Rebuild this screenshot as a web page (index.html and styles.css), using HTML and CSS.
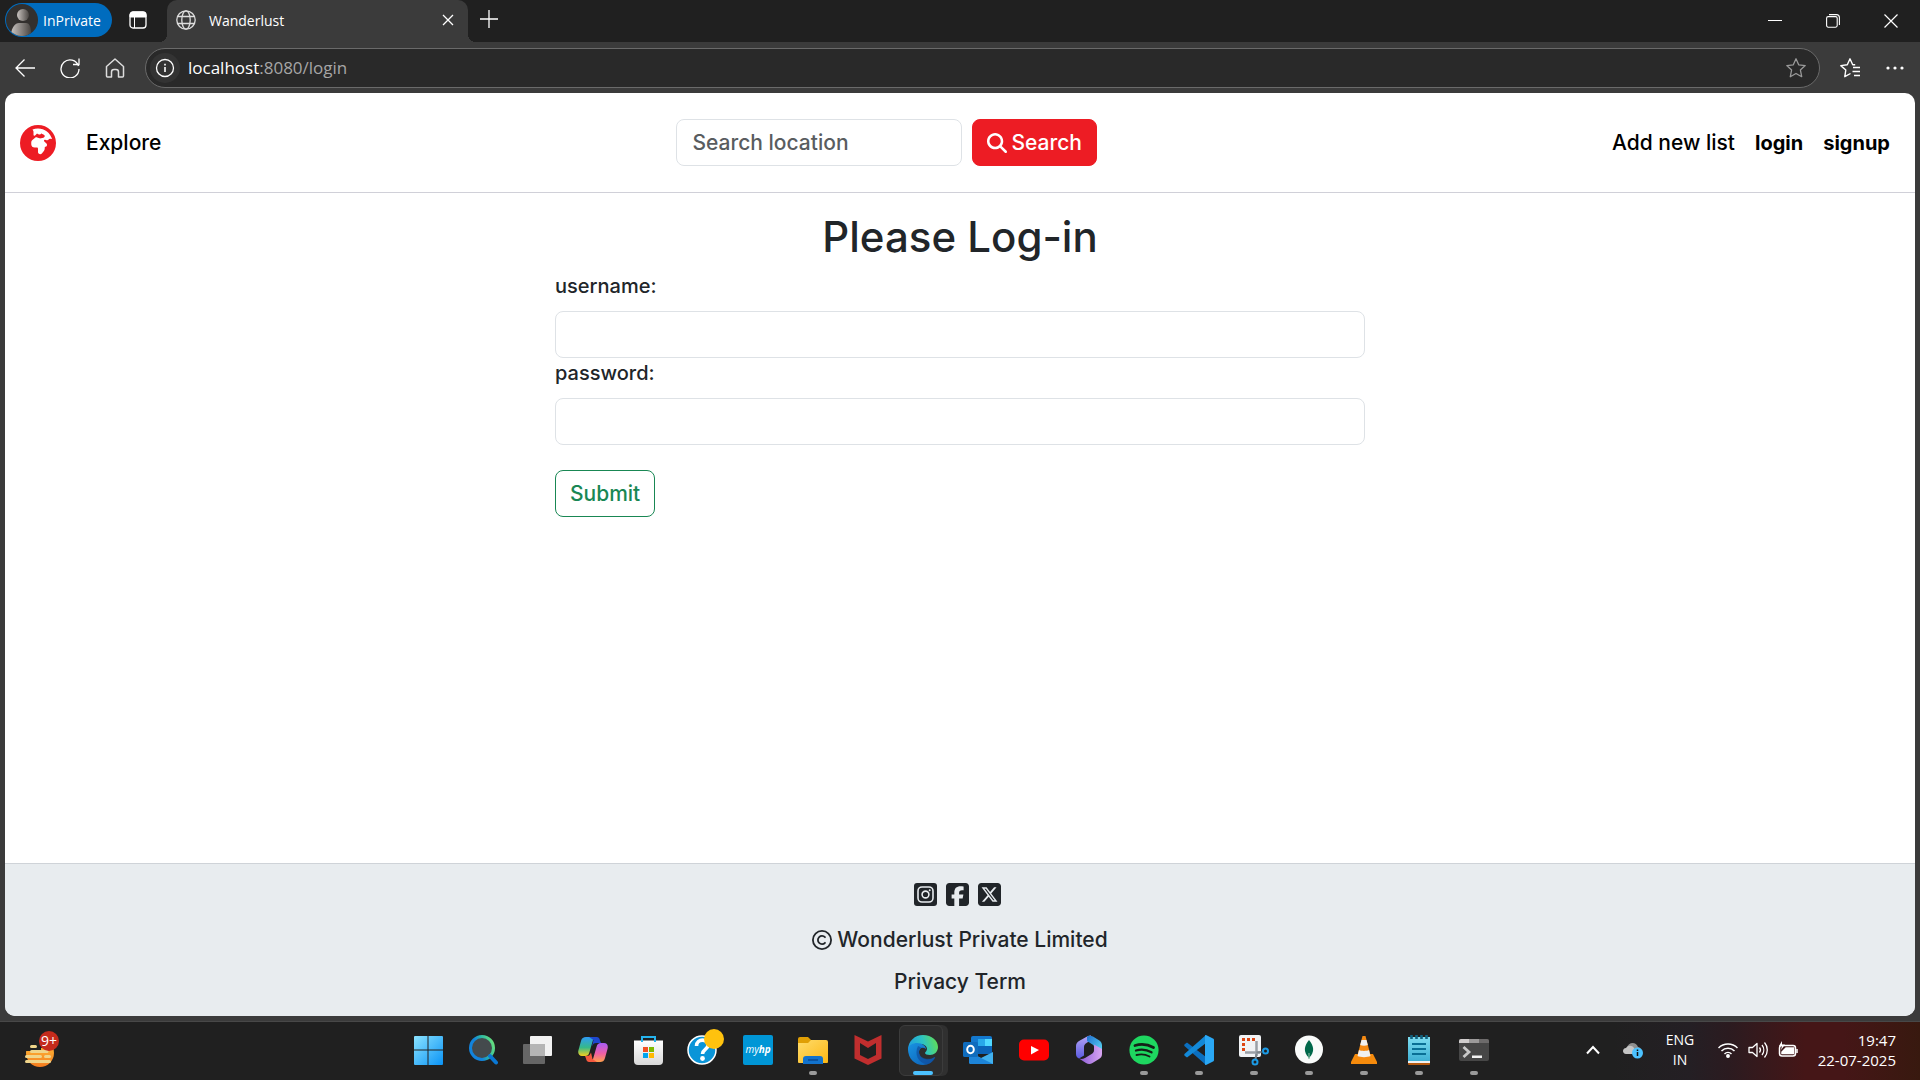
FILE: index.html
```html
<!DOCTYPE html>
<html lang="en">
<head>
<meta charset="utf-8">
<meta name="viewport" content="width=device-width, initial-scale=1">
<title>Wanderlust</title>
<link rel="stylesheet" href="styles.css">
</head>
<body>
<div class="titlebar">
  <button class="profile" type="button">
    <svg class="avatar" viewBox="0 0 32 32" aria-hidden="true">
      <defs><linearGradient id="av"><stop offset="0" stop-color="#c9c3bf"/><stop offset="1" stop-color="#4a4643"/></linearGradient>
      <clipPath id="avc"><circle cx="16" cy="16" r="16"/></clipPath></defs>
      <circle cx="16" cy="16" r="16" fill="#33302e"/>
      <g clip-path="url(#avc)" fill="url(#av)"><circle cx="17" cy="11" r="6"/><path d="M5 30c1-7 4-11 8-11h7c3 0 5 3 5 10v3H5z"/></g>
    </svg>
    InPrivate
  </button>
  <button class="icon-btn tabs-btn" type="button" aria-label="Tab actions">
    <svg width="18" height="18" viewBox="0 0 18 18" fill="none" stroke="#fff"><rect x="1" y="1" width="16" height="16" rx="3" stroke-width="1.3"/><path d="M1 5V4a3 3 0 0 1 3-3h10a3 3 0 0 1 3 3v2H1z" fill="#fff"/><path d="M5.5 6v11"/></svg>
  </button>
  <div class="tab">
    <svg width="20" height="20" viewBox="0 0 20 20" fill="none" stroke="#ddd" stroke-width="1.3"><circle cx="10" cy="10" r="9.2"/><ellipse cx="10" cy="10" rx="4.2" ry="9.2"/><path d="M1.8 6.5h16.4M1.8 13.5h16.4"/></svg>
    <span class="tab-title">Wanderlust</span>
    <button class="icon-btn" type="button" aria-label="Close tab"><svg width="12" height="12" viewBox="0 0 12 12" stroke="#fff" stroke-width="1.3"><path d="M1 1l10 10M11 1L1 11"/></svg></button>
  </div>
  <button class="icon-btn new-tab" type="button" aria-label="New tab"><svg width="18" height="18" viewBox="0 0 18 18" stroke="#fff" stroke-width="1.3"><path d="M9 0v18M0 9h18"/></svg></button>
  <div class="window-controls">
    <button class="icon-btn" type="button" aria-label="Minimize"><svg width="14" height="14" viewBox="0 0 14 14" stroke="#fff"><path d="M0 6.5h14"/></svg></button>
    <button class="icon-btn" type="button" aria-label="Restore"><svg width="14" height="14" viewBox="0 0 14 14" fill="none" stroke="#fff" stroke-width="1.1"><rect x=".6" y="2.6" width="10.6" height="10.6" rx="1.6"/><path d="M3 .6h7.4a3 3 0 0 1 3 3V11"/></svg></button>
    <button class="icon-btn" type="button" aria-label="Close"><svg width="14" height="14" viewBox="0 0 14 14" stroke="#fff" stroke-width="1.2"><path d="M.5.5l13 13M13.5.5l-13 13"/></svg></button>
  </div>
</div>

<div class="toolbar">
  <div class="nav-buttons">
    <button class="icon-btn" type="button" aria-label="Back"><svg width="20" height="20" viewBox="0 0 20 20" fill="none" stroke="#fff" stroke-width="1.3"><path d="M20 10H1M9.5 1.5L1 10l8.5 8.5"/></svg></button>
    <button class="icon-btn" type="button" aria-label="Refresh"><svg width="20" height="20" viewBox="0 0 20 20" fill="none" stroke="#fff" stroke-width="1.3"><path d="M18.5 8A9 9 0 1 0 19 11M19 .5v6h-6"/></svg></button>
    <button class="icon-btn" type="button" aria-label="Home"><svg width="20" height="20" viewBox="0 0 20 20" fill="none" stroke="#ddd" stroke-width="1.5" stroke-linejoin="round"><path d="M1.5 8.5L10 1l8.500 7.500V18a1 1 0 0 1-1 1h-4v-5a2.500 2.500 0 0 0-2.500-2.500H9A2.500 2.500 0 0 0 6.500 14v5h-4a1 1 0 0 1-1-1z"/></svg></button>
  </div>
  <div class="address">
    <span class="site-info"><svg width="20" height="20" viewBox="0 0 20 20" fill="none" stroke="#fff" stroke-width="1.3"><circle cx="10" cy="10" r="8.5"/><path d="M10 9v5M10 5.8v1.6" stroke-width="1.6"/></svg></span>
    <span class="url">localhost<span class="url-path">:8080/login</span></span>
    <button class="icon-btn" type="button" aria-label="Add to favorites"><svg width="20" height="20" viewBox="0 0 20 20" fill="none" stroke="#999" stroke-width="1.3" stroke-linejoin="round"><path d="M10 .8l2.700 6 6.500.8-4.800 4.400 1.300 6.700L10 15.500l-5.700 3.200L5.600 12 .8 7.600l6.500-.8z"/></svg></button>
  </div>
  <button class="icon-btn" type="button" aria-label="Favorites"><svg width="20" height="20" viewBox="0 0 20 20" fill="none" stroke="#fff" stroke-width="1.4" stroke-linejoin="round"><path d="M10.500 15.500l-5.700 3.200L5.800 12 .8 7.600l6.500-.8L10 .8l2.700 6h2.500M13 9.500h7M12.500 13.500H20M14 17.500h6"/></svg></button>
  <button class="icon-btn" type="button" aria-label="Settings and more"><svg width="18" height="20" viewBox="0 0 18 20" fill="#fff"><circle cx="2" cy="10" r="1.6"/><circle cx="9" cy="10" r="1.6"/><circle cx="16" cy="10" r="1.6"/></svg></button>
</div>

<div class="viewport">
  <nav class="navbar">
    <a class="brand" href="#" aria-label="Wanderlust home">
      <svg width="36" height="36" viewBox="0 0 512 512" fill="#ed1c24"><path fill-rule="evenodd" d="M177.8 63.2l10 17.4c2.800 4.800 4.200 10.300 4.200 15.900v41.400c0 3.900 1.600 7.700 4.300 10.400c6.200 6.200 16.500 5.700 22-1.200l13.600-17c4.700-5.900 12.900-7.700 19.600-4.300l15.200 7.600c3.400 1.700 7.200 2.600 11 2.600c6.500 0 12.800-2.600 17.400-7.200l3.900-3.900c2.900-2.900 7.300-3.600 11-1.800l29.200 14.600c7.800 3.900 12.600 11.800 12.600 20.500c0 10.500-7.100 19.600-17.300 22.200l-35.400 8.800c-7.400 1.800-15.100 1.500-22.400-.9l-32-10.700c-3.300-1.100-6.700-1.700-10.200-1.700c-7 0-13.800 2.300-19.400 6.500L176 212c-10.100 7.600-16 19.400-16 32v28c0 26.500 21.500 48 48 48h32c8.800 0 16 7.200 16 16v48c0 17.700 14.300 32 32 32c10.100 0 19.600-4.700 25.600-12.800l25.600-34.100c8.300-11.100 12.800-24.600 12.800-38.400V318.600c0-3.900 2.600-7.300 6.400-8.200l5.300-1.300c11.900-3 20.300-13.700 20.300-26c0-7.100-2.800-13.900-7.800-18.900l-33.500-33.500c-3.700-3.700-3.700-9.700 0-13.400c5.700-5.700 14.100-7.700 21.800-5.100l14.100 4.700c12.300 4.100 25.700-1.500 31.500-13c3.500-7 11.200-10.800 18.900-9.200l27.400 5.500C432 112.400 351.500 48 256 48c-27.700 0-54 5.400-78.200 15.200zM0 256a256 256 0 1 1 512 0A256 256 0 1 1 0 256z"/></svg>
    </a>
    <a class="nav-link" href="#">Explore</a>
    <form class="search">
      <input class="control" type="search" placeholder="Search location" aria-label="Search location">
      <button class="btn btn-search" type="button">
        <svg width="20" height="20" viewBox="0 0 512 512" fill="#fff"><path d="M416 208c0 45.900-14.900 88.300-40 122.700L502.600 457.400c12.500 12.500 12.500 32.800 0 45.300s-32.800 12.500-45.300 0L330.700 376c-34.400 25.200-76.800 40-122.700 40C93.100 416 0 322.900 0 208S93.100 0 208 0S416 93.100 416 208zM208 352a144 144 0 1 0 0-288 144 144 0 1 0 0 288z"/></svg>
        Search
      </button>
    </form>
    <a class="nav-link" href="#">Add new list</a>
    <a class="nav-link strong" href="#">login</a>
    <a class="nav-link strong" href="#">signup</a>
  </nav>

  <main class="login">
    <h1>Please Log-in</h1>
    <form class="login-form">
      <label for="username">username:</label>
      <input class="control" id="username" type="text">
      <label for="password">password:</label>
      <input class="control" id="password" type="password">
      <button class="btn btn-submit" type="button">Submit</button>
    </form>
  </main>

  <footer class="footer">
    <div class="social">
      <a href="#" aria-label="Instagram"><svg width="23" height="23" viewBox="0 0 23 23" fill="none" stroke="#e8ecef"><rect width="23" height="23" rx="3" fill="#212529" stroke="none"/><rect x="4" y="4" width="15" height="15" rx="4" stroke-width="1.6"/><circle cx="11.500" cy="11.500" r="3.400" stroke-width="1.6"/><circle cx="15.700" cy="7.300" r="1" fill="#e8ecef" stroke="none"/></svg></a>
      <a href="#" aria-label="Facebook"><svg width="23" height="23" viewBox="0 32 448 448" fill="#212529"><path d="M64 32C28.700 32 0 60.700 0 96V416c0 35.300 28.700 64 64 64h98.200V334.200H109.400V256h52.800V222.300c0-87.100 39.400-127.500 125-127.500c16.200 0 44.200 3.200 55.700 6.400V172c-6-.6-16.500-1-29.600-1c-42 0-58.200 15.900-58.200 57.200V256h83.600l-14.400 78.200H255V480H384c35.300 0 64-28.700 64-64V96c0-35.300-28.700-64-64-64H64z"/></svg></a>
      <a href="#" aria-label="X"><svg width="23" height="23" viewBox="0 32 448 448" fill="#212529"><path d="M64 32C28.700 32 0 60.700 0 96V416c0 35.300 28.700 64 64 64H384c35.300 0 64-28.700 64-64V96c0-35.300-28.700-64-64-64H64zm297.100 84L257.300 234.600 379.400 396H283.800L209 298.100 123.300 396H75.800l111-126.900L69.700 116h98l67.700 89.500L313.600 116h47.500zM323.300 367.600L153.400 142.900H125.100L296.900 367.600h26.300z"/></svg></a>
    </div>
    <p class="copyright"><svg width="20" height="20" viewBox="0 0 20 20" fill="none" stroke="#212529" stroke-width="1.8" stroke-linecap="round" aria-label="Copyright"><circle cx="10" cy="10" r="9.1"/><path d="M13 7.2a4.100 4.100 0 1 0 0 5.600"/></svg>Wonderlust Private Limited</p>
    <p><a href="#">Privacy</a> <a href="#">Term</a></p>
  </footer>
</div>

<div class="taskbar">
  <button class="widgets" type="button" aria-label="Widgets, 9+ notifications">
    <svg width="32" height="36" viewBox="0 0 32 36"><defs><linearGradient id="wd" x2="0" y2="1"><stop offset="0" stop-color="#ffc83d"/><stop offset="1" stop-color="#f57c1f"/></linearGradient></defs><circle cx="15" cy="21" r="14" fill="url(#wd)"/><path d="M0 6h30v10H16v3H0z" fill="#202020"/><path d="M6.500 14.500h4M6.500 19.500H22M1.500 24.500h14M20.500 24.500h4M1.500 29.500h23" stroke="#f0d58a" stroke-width="3" stroke-linecap="round"/></svg>
    <span class="badge">9+</span>
  </button>

  <div class="apps">
    <button type="button" aria-label="Start"><svg viewBox="0 0 30 30"><defs><linearGradient id="st" x2="1" y2="1"><stop offset="0" stop-color="#8be3ff"/><stop offset="1" stop-color="#0a93f5"/></linearGradient></defs><path fill="url(#st)" d="M1 2a1 1 0 0 1 1-1h12.500v13.500H1zM15.500 1H29a1 1 0 0 1 1 1v12.500H15.500zM1 15.500h13.500V30H2a1 1 0 0 1-1-1zM15.500 15.500H30V29a1 1 0 0 1-1 1H15.500z"/></svg></button>
    <button type="button" aria-label="Search"><svg viewBox="0 0 30 30" fill="none"><defs><linearGradient id="se" x1="0" y1=".6" x2="1" y2=".2"><stop offset=".3" stop-color="#1283dc"/><stop offset=".6" stop-color="#2bb7a5"/><stop offset="1" stop-color="#6be27b"/></linearGradient></defs><circle cx="14" cy="13" r="11.500" stroke="url(#se)" stroke-width="3" fill="#444a4d"/><path d="M22 21l6 6.500" stroke="#0a78d4" stroke-width="4" stroke-linecap="round"/></svg></button>
    <button type="button" aria-label="Task view"><svg viewBox="0 0 30 30"><rect x="0" y="9" width="22" height="20" rx="1" fill="#666"/><rect x="7" y="1" width="22" height="20" rx="1" fill="#f2f2f2"/><path d="M7 9h15v12H7z" fill="#b5b5b5"/></svg></button>
    <button type="button" aria-label="Copilot"><svg viewBox="0 0 30 30"><defs><linearGradient id="c1" x2="0" y2="1"><stop offset="0" stop-color="#2f9bf5"/><stop offset=".55" stop-color="#35b98a"/><stop offset="1" stop-color="#f6d01e"/></linearGradient><linearGradient id="c2" x2="0" y2="1"><stop offset="0" stop-color="#a85cf5"/><stop offset=".55" stop-color="#ef5fa5"/><stop offset="1" stop-color="#ffa04a"/></linearGradient></defs><path d="M8 2h10l-3 3-3.500 12c-.8 3-2 4-4.500 4H4c-3 0-4.500-2.500-3.500-6l2.500-9c.8-3 2.500-4 5-4z" fill="url(#c1)"/><path d="M11 2h7c3 0 3.500 1.500 4 3.500l1 2.500h-5c-2 0-3 1-4 3.500L15.500 5z" fill="#1f48cf"/><path d="M22 27H12l3-3 3.500-12c.8-3 2-4 4.500-4h3c3 0 4.500 2.500 3.500 6l-2.500 9c-.8 3-2.500 4-5 4z" fill="url(#c2)"/><path d="M19 27h-7c-3 0-3.500-1.500-4-3.500L7 21h2c2 0 3-1 4-3.500L14.500 24z" fill="#f4583e"/></svg></button>
    <button type="button" aria-label="Microsoft Store"><svg viewBox="0 0 30 30"><defs><linearGradient id="ms" x2="0" y2="1"><stop offset="0" stop-color="#fff"/><stop offset="1" stop-color="#d8d8d8"/></linearGradient></defs><path d="M1 5.500h29V26a4 4 0 0 1-4 4H5a4 4 0 0 1-4-4z" fill="url(#ms)"/><path d="M9 7V2h13v5" fill="none" stroke="#25b4ee" stroke-width="2"/><path d="M10 12h5v5h-5z" fill="#f25022"/><path d="M16 12h5v5h-5z" fill="#7fba00"/><path d="M10 18h5v5h-5z" fill="#00a4ef"/><path d="M16 18h5v5h-5z" fill="#ffb900"/></svg></button>
    <button type="button" aria-label="Help"><svg viewBox="0 0 30 30" overflow="visible"><circle cx="14" cy="15" r="14" fill="#0a95d8" stroke="#fff" stroke-width="1.5"/><path d="M8.500 11c0-8 12-7.500 11.500-.5-.3 4-5.500 4-5.500 8.500" fill="none" stroke="#fff" stroke-width="3.6"/><circle cx="14.500" cy="23.500" r="2.400" fill="#fff"/><circle cx="26" cy="4" r="10" fill="#ffc20e"/></svg></button>
    <button type="button" aria-label="myHP"><span class="myhp">my<b>hp</b></span></button>
    <button type="button" class="running" aria-label="File Explorer"><svg viewBox="0 0 30 30"><defs><linearGradient id="fe" x2="1" y2="1"><stop offset="0" stop-color="#ffdc6b"/><stop offset="1" stop-color="#fcb714"/></linearGradient></defs><path d="M0 4a2 2 0 0 1 2-2h8l3 3v5H0z" fill="#e09f05"/><path d="M0 8h10l3-3h15a2 2 0 0 1 2 2v20a1 1 0 0 1-1 1H1a1 1 0 0 1-1-1z" fill="url(#fe)"/><path d="M5 29v-5a3 3 0 0 1 3-3h14a3 3 0 0 1 3 3v5z" fill="#1272cc"/><path d="M10 25h10" stroke="#0a4a92" stroke-width="1.5"/></svg></button>
    <button type="button" aria-label="McAfee"><svg viewBox="0 0 30 30"><path d="M1.500 0L15 6.500 28.500 0v23.500L15 30 1.500 23.500zM7 8v12l8 4 8-4V8l-8 5z" fill="#c12e2e" fill-rule="evenodd"/></svg></button>
    <button type="button" class="active" aria-label="Microsoft Edge"><svg viewBox="0 0 30 30"><defs><linearGradient id="e1" y1=".5" y2=".3"><stop offset="0" stop-color="#1f9de0"/><stop offset=".5" stop-color="#2cc2c4"/><stop offset="1" stop-color="#62df52"/></linearGradient><linearGradient id="e2" x2="1" y2="1"><stop offset="0" stop-color="#1993e2"/><stop offset="1" stop-color="#0b5cb3"/></linearGradient></defs><path d="M0 15C0 6 7 0 15 0c9 0 15 6 15 12 0 5-4 8-8 8-3 0-5-1-5-2s2-2 2-4c0-3-3-5-7-5-6 0-11 3-12 8z" fill="url(#e1)"/><path d="M0 14c1-4 5-6 9-6 5 0 9 3 9 6-4-3-7 0-7 3 0 7 9 10 16 5-2 5-7 8-12 8C7 30 0 24 0 14z" fill="url(#e2)"/><path d="M10 11c-4 8 0 17 9 18.500C25 28 28 22 27 22c-7 4-16 1-16-5 0-2 1-4 3-4z" fill="#104f9e" opacity=".7"/></svg></button>
    <button type="button" aria-label="Outlook"><svg viewBox="0 0 30 30"><path d="M8 3a2 2 0 0 1 2-2h17a2 2 0 0 1 2 2v15H8z" fill="#1378ce"/><path d="M15 4h7v7h-7z" fill="#28a8ea"/><path d="M22 4h7v7h-7z" fill="#50d9ff"/><path d="M15 11h14v8H15z" fill="#0b63b8"/><path d="M6 17l12 6 12-6v12H8a2 2 0 0 1-2-2z" fill="#41b1ee"/><path d="M6 17l24 12H8a2 2 0 0 1-2-2z" fill="#1d84d8"/><rect y="7" width="15" height="15" rx="1.500" fill="#0f6cbd"/><ellipse cx="7.500" cy="14.500" rx="3.300" ry="3.800" fill="none" stroke="#fff" stroke-width="2"/></svg></button>
    <button type="button" aria-label="YouTube"><svg viewBox="0 0 30 30"><rect y="4.500" width="30" height="21" rx="5" fill="#f00"/><path d="M12 11l8 4-8 4.500z" fill="#fff"/></svg></button>
    <button type="button" aria-label="Microsoft 365"><svg viewBox="0 0 30 30"><defs><linearGradient id="m1" x2="0" y2="1"><stop offset="0" stop-color="#b7a6f5"/><stop offset="1" stop-color="#5a5be0"/></linearGradient><linearGradient id="m2" x2="1" y2="1"><stop offset="0" stop-color="#1f6fd0"/><stop offset="1" stop-color="#5fe0f5"/></linearGradient><linearGradient id="m3" x2="1"><stop offset="0" stop-color="#8b5bd6"/><stop offset="1" stop-color="#d9a6f2"/></linearGradient></defs><path d="M14 1L5 6C3 7.200 2 9 2 11v8c0 2 1 3.500 3 4.500l5-3V12c0-2 1-3 2.500-4L17 5V0.500C16 .3 15 .5 14 1z" fill="url(#m1)"/><path d="M13 1.500c2-1.200 4-1 6 0l6 3.700c2 1.200 3 3 3 5.300V19l-8-3v-4c0-1-.5-2-1.500-2.500L13 6z" fill="url(#m2)"/><path d="M28 14v5c0 2-1 4-3 5l-6.500 4c-2 1.200-4.500 1.200-6.500 0l-7-4.500c2 .8 4 .5 6-.6l7-4.200c1.500-1 2-2 2-3.700v-5.500z" fill="url(#m3)"/></svg></button>
    <button type="button" class="running" aria-label="Spotify"><svg viewBox="0 0 30 30" fill="none" stroke="#142017" stroke-linecap="round"><circle cx="15" cy="15" r="14.600" fill="#1ed760" stroke="none"/><path d="M6 10.500c6-1.800 13-1 18.500 2" stroke-width="2.8"/><path d="M7 15.500c5-1.500 11-.8 15.500 1.800" stroke-width="2.3"/><path d="M7.500 20c4.500-1.200 9-.7 13 1.500" stroke-width="1.9"/></svg></button>
    <button type="button" class="running" aria-label="Visual Studio Code"><svg viewBox="0 0 30 30"><path d="M1 9l2-1.500L22 22v8L1 11.500c-1-.8-1-1.700 0-2.500z" fill="#0b6fbf"/><path d="M1 21l2 1.500L22 8V0L1 18.500c-1 .8-1 1.700 0 2.500z" fill="#1389d8"/><path d="M22 0l7 3.500c.7.300 1 .8 1 1.500v20c0 .7-.3 1.200-1 1.500L22 30c-.8 0-1-.5-1-1V1c0-.5.200-1 1-1z" fill="#2aa8f5"/></svg></button>
    <button type="button" class="running" aria-label="Snipping Tool"><svg viewBox="0 0 30 30" overflow="visible" fill="none"><rect width="22" height="22" rx="2" fill="#f1f3f5"/><path d="M16 4.500H4.500V17" stroke="#dd4612" stroke-width="3" stroke-dasharray="3 2"/><path d="M17.500 6v15M6 17.500h15" stroke="#9aa0a6" stroke-width="2.5"/><path d="M17.500 17.500l5-.5M17.500 19l-1 5" stroke="#7d858c" stroke-width="2"/><circle cx="26.500" cy="16" r="2.500" stroke="#1b9be6" stroke-width="2"/><circle cx="16" cy="27" r="2.500" stroke="#1b9be6" stroke-width="2"/></svg></button>
    <button type="button" class="running" aria-label="MongoDB Compass"><svg viewBox="0 0 30 30"><circle cx="15" cy="14.500" r="14" fill="#f9fbfa"/><path d="M15 5c5 6 6 12 0 18-6-6-5-12 0-18z" fill="#00684a"/><path d="M15 18v6" stroke="#7cb89c" stroke-width="1.2"/></svg></button>
    <button type="button" class="running" aria-label="VLC"><svg viewBox="0 0 30 30"><path d="M6 19h18l4 8v2H2v-2z" fill="#f68b0c"/><path d="M13.500 1h3L22 22c-3 2-11 2-14 0z" fill="#f58a13"/><path d="M12.500 5h5l1.300 5c-2 1-5.600 1-7.600 0zM10 15c2.500 1.200 7.500 1.200 10 0l1.500 6c-3 1.500-10 1.500-13 0z" fill="#f0f0f0"/></svg></button>
    <button type="button" class="running" aria-label="Notepad"><svg viewBox="0 0 30 30"><defs><linearGradient id="np" x2="0" y2="1"><stop offset="0" stop-color="#7ddcf0"/><stop offset="1" stop-color="#3fb0d4"/></linearGradient></defs><path d="M4 25h22v4a1 1 0 0 1-1 1H5a1 1 0 0 1-1-1z" fill="#b5590f"/><path d="M4 24h22v4H4z" fill="#f0f0f0"/><path d="M4 2h22v24H4z" fill="url(#np)"/><path d="M8 9h14M8 14h14M8 19h14" stroke="#0a6f95" stroke-width="1.8"/><path d="M7.500 0v4M12.500 0v4M17.500 0v4M22.500 0v4" stroke="#12627f" stroke-width="2.6"/></svg></button>
    <button type="button" class="running" aria-label="Terminal"><svg viewBox="0 0 30 30"><rect y="4" width="30" height="22" rx="2" fill="#474747"/><path d="M0 8V6a2 2 0 0 1 2-2h8v4z" fill="#d0cdcd"/><path d="M10 4h10v4H10z" fill="#9c9a9a"/><path d="M20 4h8a2 2 0 0 1 2 2v2H20z" fill="#6d6b6b"/><path d="M4.500 12l5.500 5-5.500 5" fill="none" stroke="#c9c9c9" stroke-width="2.8"/><path d="M13 20.500h10v2.500H13z" fill="#f2f2f2"/></svg></button>
  </div>

  <div class="tray">
    <button class="icon-btn" type="button" aria-label="Show hidden icons"><svg width="14" height="20" viewBox="0 0 14 20" fill="none" stroke="#fff" stroke-width="2"><path d="M1 13.500L7 7l6 6.500"/></svg></button>
    <button class="icon-btn cloud" type="button" aria-label="OneDrive"><svg width="20" height="20" viewBox="0 0 20 20"><path d="M4 8c1-6 9-7 11-1 3 0 4 4 2 6H6z" fill="#8f8f8f"/><path d="M3 14c-4 0-4-6 0-6 2-3 6-3 8 0l2 6z" fill="#c4c4c4"/><circle cx="14.500" cy="13" r="5.500" fill="#4cc2ff"/><path d="M14.500 12v4M14.500 9.500v1.500" stroke="#111" stroke-width="1.5"/></svg></button>
    <button class="tray-text lang" type="button">ENG<br>IN</button>
    <button class="icon-btn quick" type="button" aria-label="Network, volume and battery">
      <svg width="20" height="20" viewBox="0 0 20 20" fill="none" stroke="#fff" stroke-width="1.5"><path d="M.5 8a13.500 13.500 0 0 1 19 0M3.500 11a9.200 9.200 0 0 1 13 0M6.500 14a5 5 0 0 1 7 0"/><circle cx="10" cy="16" r="1.2" fill="#fff"/></svg>
      <svg width="20" height="20" viewBox="0 0 20 20" fill="none" stroke="#fff" stroke-width="1.3" stroke-linejoin="round"><path d="M1 7.500h3.500L9 3.500v13l-4.500-4H1zM11.500 7.500a4 4 0 0 1 0 5M14 5a8 8 0 0 1 0 10M16.500 2.500a11.500 11.500 0 0 1 0 15"/></svg>
      <svg width="20" height="20" viewBox="0 0 20 20" fill="none" stroke="#fff" stroke-width="1.5"><rect x="1.500" y="5.500" width="16" height="10.500" rx="2.500"/><path d="M19 9v4"/><path d="M4 13.500h11.500v-5.500H8l-4 4z" fill="#fff"/><path d="M4 1L1 6h3l-1 4 4-5.500H4z" fill="#fff" stroke="none"/></svg>
    </button>
    <button class="tray-text clock" type="button">19:47<br>22-07-2025</button>
  </div>
</div>
</body>
</html>
```
FILE: styles.css
```css
* { box-sizing: border-box; }

body {
  margin: 0;
  min-height: 100vh;
  display: flex;
  flex-direction: column;
  background: #3b3b3b;
  color: #fff;
  font-family: "Open Sans", "Noto Sans", sans-serif;
  font-size: 14px;
}

button {
  margin: 0;
  padding: 0;
  border: 0;
  background: none;
  color: inherit;
  font: inherit;
}

svg { display: block; flex: none; }
a { color: inherit; text-decoration: none; }

.icon-btn { display: flex; align-items: center; justify-content: center; }

/* Window title bar */
.titlebar {
  display: flex;
  align-items: flex-start;
  height: 42px;
  padding-left: 5px;
  background: #202020;
}

.profile {
  display: flex;
  align-items: center;
  gap: 5px;
  width: 107px;
  height: 34px;
  margin-top: 3px;
  padding-left: 1px;
  border-radius: 17px;
  background: #006cbe;
}

.avatar { width: 32px; height: 32px; }
.tabs-btn { width: 18px; height: 40px; margin-left: 17px; }

.tab {
  position: relative;
  display: flex;
  align-items: center;
  gap: 13px;
  width: 301px;
  height: 42px;
  margin-left: 20px;
  padding: 0 14px 2px 9px;
  border-radius: 10px 10px 0 0;
  background: #3b3b3b;
}

.tab::before,
.tab::after {
  content: "";
  position: absolute;
  bottom: 0;
  width: 8px;
  height: 8px;
}

.tab::before { right: 100%; background: radial-gradient(circle at 0 0, #202020 8px, #3b3b3b 8px); }
.tab::after { left: 100%; background: radial-gradient(circle at 100% 0, #202020 8px, #3b3b3b 8px); }
.tab-title { flex: 1; }
.new-tab { height: 38px; margin-left: 12px; }
.window-controls { display: flex; margin-left: auto; }
.window-controls .icon-btn { width: 58px; height: 42px; }

/* Address toolbar */
.toolbar {
  display: flex;
  align-items: center;
  gap: 20px;
  height: 51px;
  padding: 0 16px 0 15px;
}

.nav-buttons { display: flex; gap: 25px; }

.address {
  flex: 1;
  display: flex;
  align-items: center;
  gap: 8px;
  height: 40px;
  padding: 0 13px 0 4px;
  border: 1px solid #6a6a6a;
  border-radius: 20px;
  background: #292929;
}

.toolbar > .icon-btn:last-child { margin-left: 6px; }

.site-info {
  display: flex;
  align-items: center;
  justify-content: center;
  width: 30px;
  height: 30px;
  border-radius: 50%;
  background: #333;
}

.url { flex: 1; font-size: 17px; }
.url-path { color: #a6a6a6; }

/* Page shown in the browser */
.viewport {
  flex: 1;
  display: flex;
  flex-direction: column;
  margin: 0 5px 5px;
  border-radius: 10px;
  overflow: hidden;
  background: #fff;
  color: #212529;
  font-family: Inter, "Liberation Sans", sans-serif;
  font-size: 21px;
  font-weight: 500;
  line-height: 30px;
}

.navbar {
  display: flex;
  align-items: center;
  min-height: 100px;
  padding: 0 15px;
  border-bottom: 1px solid #d0d0d8;
}

.brand { margin-right: 20px; }
.nav-link { padding: 10px; color: #000; }
.strong { font-size: 20px; font-weight: 700; }
.search { display: flex; gap: 10px; margin: 0 auto; }

.control {
  width: 100%;
  height: 47px;
  padding: 0 15px;
  border: 1px solid #dee2e6;
  border-radius: 8px;
  background: #fff;
  color: inherit;
  font: inherit;
}

.control::placeholder { color: #595c5f; opacity: 1; }
.search .control { width: 286px; }

.btn {
  display: flex;
  align-items: center;
  justify-content: center;
  gap: 4px;
  height: 47px;
  padding: 0 14px;
  border: 1px solid;
  border-radius: 8px;
}

.btn-search { border-color: #ed1c24; background: #ed1c24; color: #fff; }

.login {
  flex: 1;
  width: 100%;
  max-width: 810px;
  margin: 0 auto;
  padding: 20px 0;
}

h1 {
  margin: 0 0 10px;
  font-size: 42px;
  font-weight: 500;
  line-height: 48px;
  text-align: center;
}

.login-form { display: flex; flex-direction: column; }
.login-form label { margin-bottom: 10px; font-size: 20px; }
.btn-submit { align-self: flex-start; margin-top: 25px; color: #198754; }

.footer {
  display: flex;
  flex-direction: column;
  align-items: center;
  gap: 12px;
  padding: 19px 0;
  border-top: 1px solid #cfd3d8;
  background: #e8ecef;
}

.social { display: flex; gap: 9px; padding-right: 6px; margin-bottom: 7px; }
.footer p { margin: 0; }
.copyright { display: flex; align-items: center; gap: 5px; }

/* Desktop taskbar */
.taskbar {
  display: grid;
  grid-template-columns: 1fr 1102px 1fr;
  height: 59px;
  padding: 0 18px 2px 0;
  border-top: 1px solid #484848;
  background: linear-gradient(90deg, #202020 84%, #241f24 88%, #2b1b20 90%, #451617 94%, #451617 96%, #38190f 100%);
}

.widgets {
  position: relative;
  justify-self: start;
  align-self: center;
  margin-left: 25px;
}

.badge {
  position: absolute;
  top: -1px;
  left: 14px;
  width: 20px;
  height: 20px;
  border-radius: 50%;
  background: #c42b1c;
  font-size: 14px;
  line-height: 20px;
}

.apps { display: flex; }

.apps button {
  position: relative;
  flex: 1;
  display: flex;
  align-items: center;
  justify-content: center;
}

.apps svg { position: relative; width: 30px; height: 30px; }

.running::after,
.active::after {
  content: "";
  position: absolute;
  bottom: 3px;
  width: 8px;
  height: 4px;
  border-radius: 2px;
  background: #9a9a9a;
}

.active::after { width: 20px; background: #4cc2ff; }

.active::before {
  content: "";
  position: absolute;
  inset: 3px 8px 2px 3px;
  border: 1px solid #3c3c3c;
  border-radius: 6px;
  background: #2d2d2d;
  box-shadow: 5px 0 0 #303030;
}

.myhp {
  width: 30px;
  height: 30px;
  border-radius: 2px;
  background: #0096d6;
  font-size: 10px;
  font-style: italic;
  line-height: 28px;
}

.tray {
  display: flex;
  align-items: center;
  justify-content: flex-end;
  padding-right: 6px;
}

.tray-text { line-height: 20px; }
.cloud { margin-left: 23px; }
.lang { width: 30px; margin-left: 22px; }
.quick { gap: 10px; margin-left: 23px; }
.clock { width: 80px; margin-left: 18px; font-size: 15px; text-align: right; }
```
